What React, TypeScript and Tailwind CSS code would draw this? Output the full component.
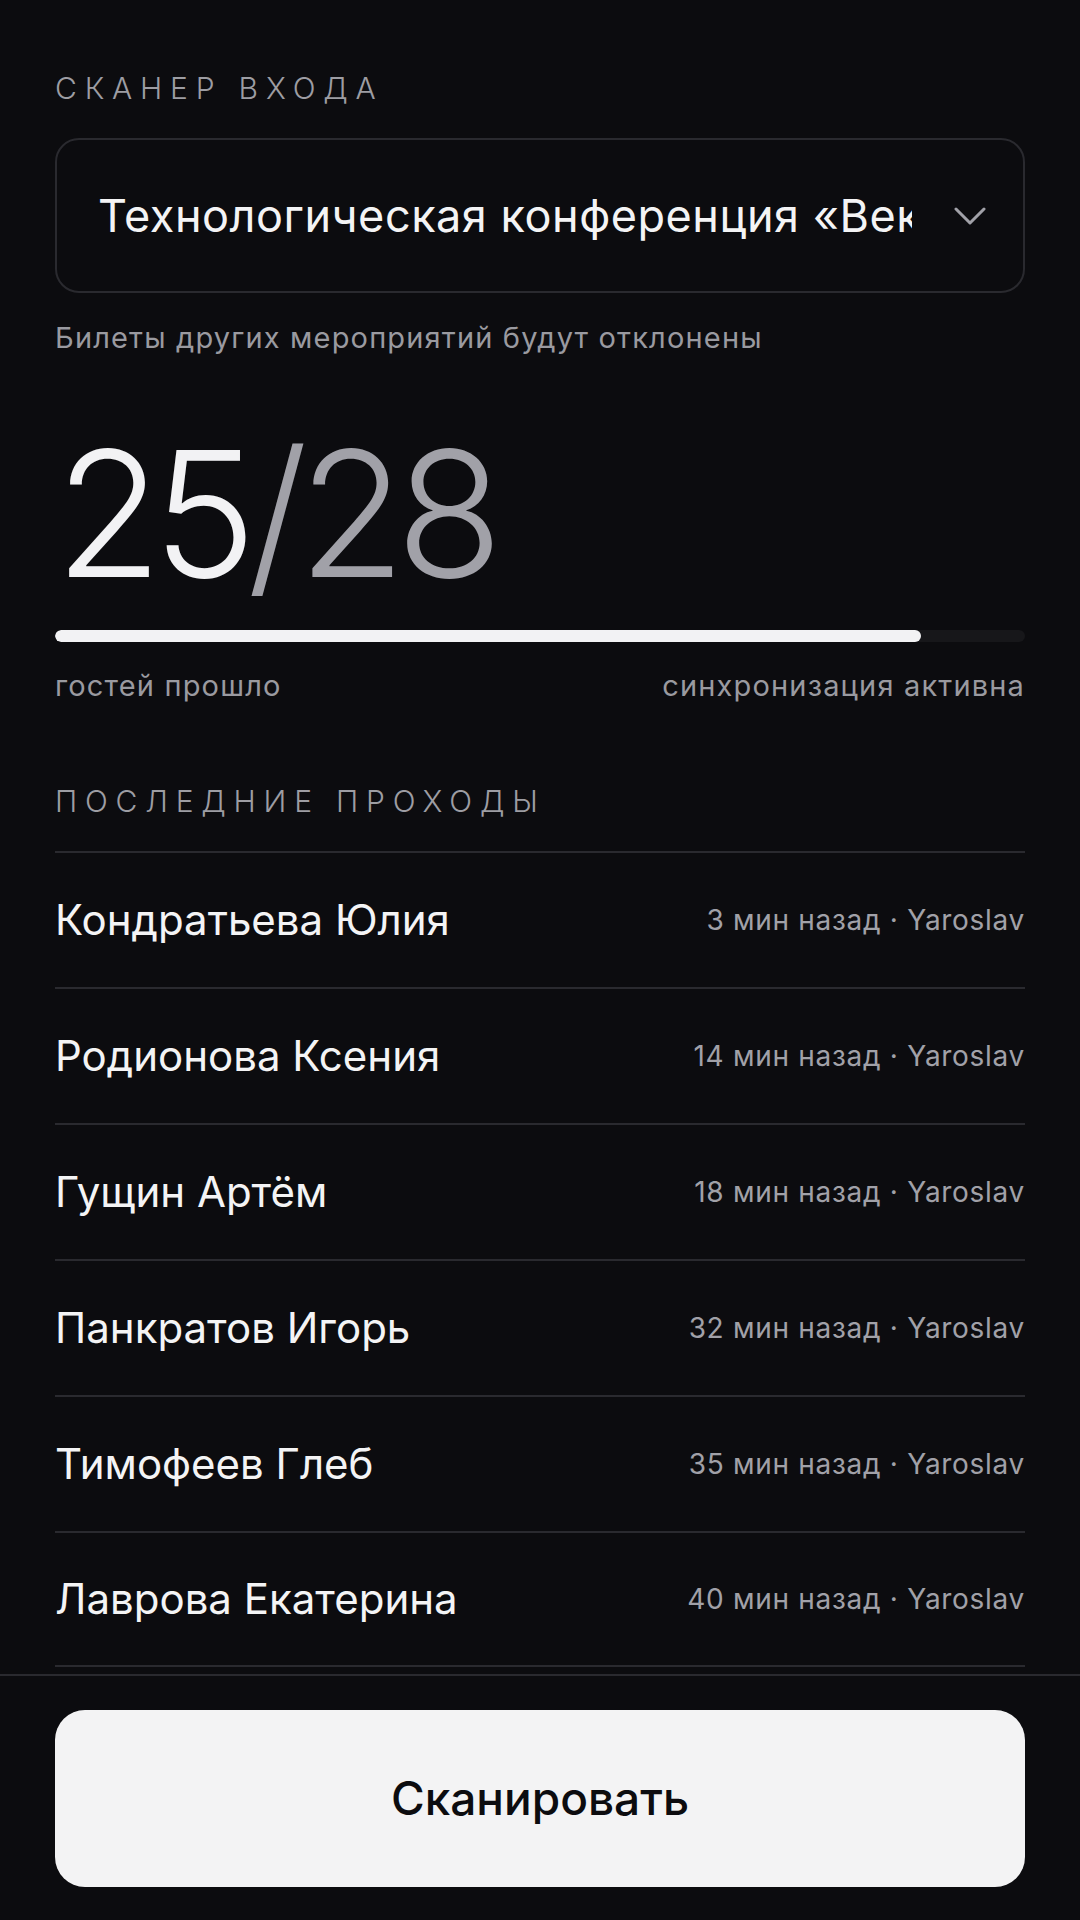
import React from "react";

const rows = [
  { name: "Кондратьева Юлия", time: "3 мин назад" },
  { name: "Родионова Ксения", time: "14 мин назад" },
  { name: "Гущин Артём", time: "18 мин назад" },
  { name: "Панкратов Игорь", time: "32 мин назад" },
  { name: "Тимофеев Глеб", time: "35 мин назад" },
  { name: "Лаврова Екатерина", time: "40 мин назад" },
];

export default function App() {
  const done = 25;
  const total = 28;
  return (
    <div
      className="h-[1920px] w-full bg-[#0c0c0f] flex flex-col overflow-hidden"
      style={{ fontFamily: "Inter, 'Noto Sans', sans-serif" }}
    >
      <div className="flex-1 overflow-hidden px-[55px] pt-[70px]">
        <div className="text-[30px] leading-[36px] tracking-[0.26em] text-[#9d9da3] font-light">
          СКАНЕР ВХОДА
        </div>

        <div className="mt-[32px] h-[155px] rounded-[24px] border-2 border-[#2a2a2f] flex items-center pl-[41px] pr-[37px]">
          <div className="w-[814px] overflow-hidden whitespace-nowrap text-[45px] leading-[52px] tracking-[0.012em] text-[#f4f4f5]">
            Технологическая конференция «Вектор 2025»
          </div>
          <div className="flex-1 flex justify-end">
            <svg width="32" height="18" viewBox="0 0 32 18" fill="none">
              <polyline
                points="2,2 16,16 30,2"
                stroke="#a1a1a8"
                strokeWidth="3"
                strokeLinecap="round"
                strokeLinejoin="round"
              />
            </svg>
          </div>
        </div>

        <div className="mt-[27px] text-[29px] leading-[36px] tracking-[0.04em] text-[#9a9aa0]">
          Билеты других мероприятий будут отклонены
        </div>

        <div className="mt-[67px] h-[180px] leading-[180px] text-[175px] font-light tracking-[-0.055em] whitespace-nowrap">
          <span className="text-[#f2f2f4]">{done}</span>
          <span className="text-[#a1a1a8]">/{total}</span>
        </div>

        <div className="mt-[27px] h-[12px] rounded-full bg-[#17171a] overflow-hidden">
          <div
            className="h-full rounded-full bg-[#f2f2f4]"
            style={{ width: `${(done / total) * 100}%` }}
          />
        </div>

        <div className="mt-[26px] flex justify-between text-[29px] leading-[36px] tracking-[0.04em] text-[#9a9aa0]">
          <span>гостей прошло</span>
          <span>синхронизация активна</span>
        </div>

        <div className="mt-[79px] text-[30px] leading-[36px] tracking-[0.26em] text-[#9d9da3] font-light">
          ПОСЛЕДНИЕ ПРОХОДЫ
        </div>

        <div className="mt-[32px]">
          {rows.map((r, i) => (
            <div
              key={r.name}
              className={`h-[136px] border-t-2 border-[#2a2a2f] flex items-center justify-between ${
                i === rows.length - 1 ? "border-b-2" : ""
              }`}
            >
              <span className="text-[42px] leading-[52px] text-[#f4f4f5]">
                {r.name}
              </span>
              <span className="text-[28px] leading-[34px] tracking-[0.025em] text-[#a1a1a8]">
                {r.time} · Yaroslav
              </span>
            </div>
          ))}
        </div>
      </div>

      <div className="border-t-2 border-[#2a2a2f] px-[55px] pt-[34px] pb-[33px]">
        <button className="w-full h-[177px] rounded-[30px] bg-[#f3f3f4] text-[#0c0c0f] text-[46px] font-medium">
          Сканировать
        </button>
      </div>
    </div>
  );
}
